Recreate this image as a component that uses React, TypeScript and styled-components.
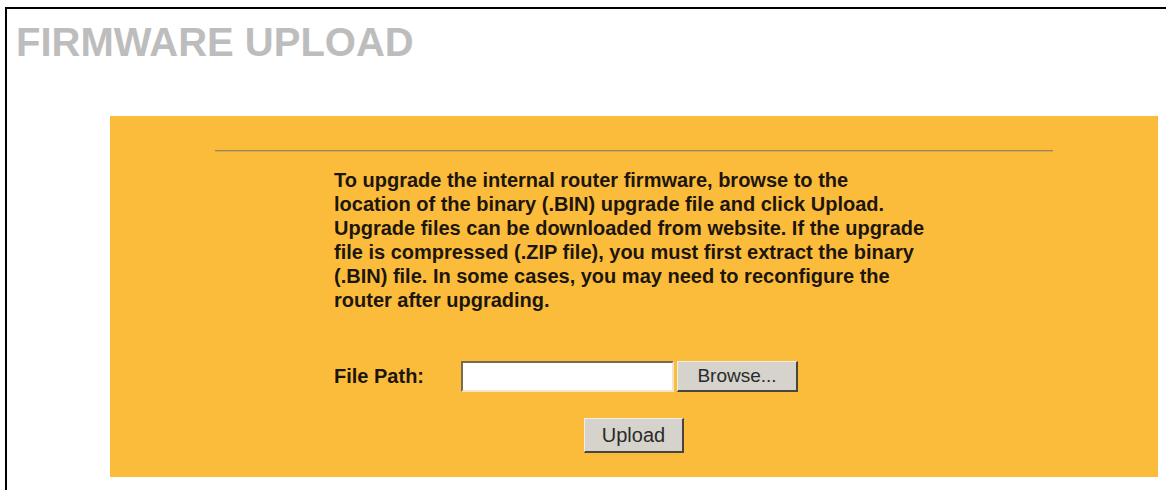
import React from "react";
import styled, { createGlobalStyle } from "styled-components";

const GlobalStyle = createGlobalStyle`
  html, body {
    margin: 0;
    padding: 0;
    background: #ffffff;
  }
  body {
    font-family: "Liberation Sans", Arial, sans-serif;
    overflow: hidden;
  }
`;

const Frame = styled.div`
  margin: 7px 0 0 5px;
  border-top: 2px solid #000;
  border-left: 2px solid #000;
  min-height: calc(100vh - 9px);
  box-sizing: border-box;
`;

const Title = styled.h1`
  margin: 10px 0 51px 9px;
  font-family: "Liberation Sans", Arial, sans-serif;
  font-size: 40px;
  line-height: 46px;
  font-weight: 700;
  color: #bdbdbd;
`;

const Panel = styled.section`
  margin-left: 103px;
  width: 1048px;
  height: 361px;
  box-sizing: border-box;
  background: #fcbc3b;
  padding-top: 34px;
  display: flex;
  flex-direction: column;
  align-items: center;
`;

const Rule = styled.hr`
  width: 80%;
  margin: 0;
  height: 0;
  border: none;
  border-top: 1px solid #9c8656;
  border-bottom: 1px solid #d9a846;
`;

const Column = styled.div`
  width: 600px;
  margin-top: 16px;
  display: flex;
  flex-direction: column;
`;

const Intro = styled.p`
  margin: 0;
  font-size: 20px;
  line-height: 24px;
  font-weight: 700;
  color: #1c160e;
  white-space: nowrap;
`;

const FileRow = styled.div`
  margin-top: 49px;
  display: flex;
  align-items: center;
`;

const Label = styled.label`
  width: 127px;
  font-size: 20px;
  font-weight: 700;
  color: #1c160e;
`;

const PathInput = styled.input`
  width: 213px;
  height: 31px;
  box-sizing: border-box;
  margin: 0;
  padding: 0 4px;
  background: #fff;
  border-style: solid;
  border-width: 2px;
  border-color: #7a6a50 #f4e6c4 #f4e6c4 #7a6a50;
  font-family: "Liberation Sans", Arial, sans-serif;
  font-size: 16px;
  outline: none;
`;

const Button = styled.button<{ $w: number; $h: number }>`
  width: ${(p) => p.$w}px;
  height: ${(p) => p.$h}px;
  box-sizing: border-box;
  margin: 0;
  padding: 0;
  background: #d6d3cd;
  border-style: solid;
  border-width: 1px 2px 2px 1px;
  border-color: #f2eee6 #4a443c #4a443c #f2eee6;
  font-family: "Liberation Sans", Arial, sans-serif;
  font-size: 20px;
  font-weight: 400;
  color: #2a2a2a;
  cursor: pointer;
`;

const BrowseButton = styled(Button)`
  margin-left: 3px;
  font-size: 19px;
`;

const UploadRow = styled.div`
  margin-top: 26px;
  display: flex;
  justify-content: center;
`;

export default function App() {
  return (
    <>
      <GlobalStyle />
      <Frame>
        <Title>FIRMWARE UPLOAD</Title>
        <Panel>
          <Rule />
          <Column>
            <Intro>
              To upgrade the internal router firmware, browse to the
              <br />
              location of the binary (.BIN) upgrade file and click Upload.
              <br />
              Upgrade files can be downloaded from website. If the upgrade
              <br />
              file is compressed (.ZIP file), you must first extract the binary
              <br />
              (.BIN) file. In some cases, you may need to reconfigure the
              <br />
              router after upgrading.
            </Intro>
            <FileRow>
              <Label htmlFor="file-path">File Path:</Label>
              <PathInput id="file-path" type="text" />
              <BrowseButton $w={121} $h={31} type="button">
                Browse...
              </BrowseButton>
            </FileRow>
          </Column>
          <UploadRow>
            <Button $w={100} $h={35} type="button">
              Upload
            </Button>
          </UploadRow>
        </Panel>
      </Frame>
    </>
  );
}
